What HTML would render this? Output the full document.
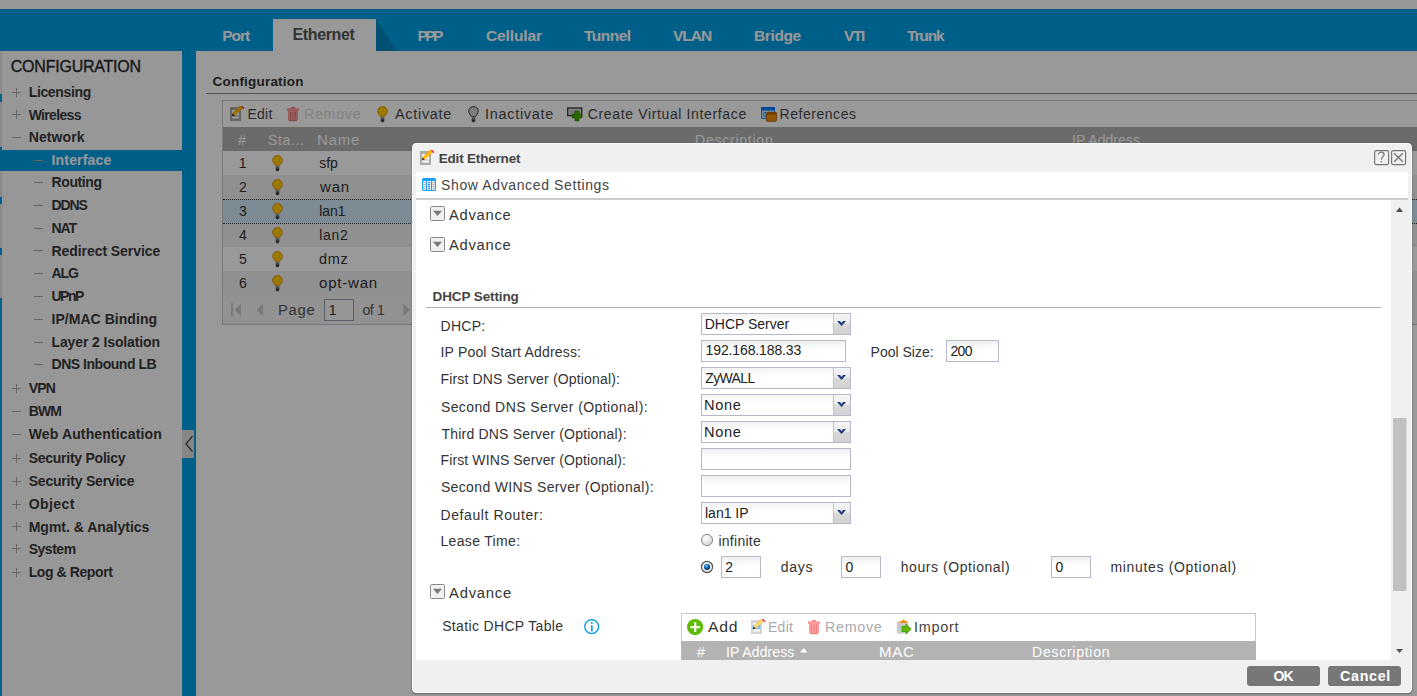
<!DOCTYPE html>
<html><head><meta charset="utf-8">
<style>
*{margin:0;padding:0;box-sizing:border-box}
html,body{width:1417px;height:696px;overflow:hidden}
body{position:relative;background:#fff;font-family:"Liberation Sans",sans-serif;color:#333}
.a{position:absolute;white-space:nowrap}
.sel{border:1px solid #b6b8cc;background:linear-gradient(#f2f2f2,#fff 40%)}
.selarr{border-left:1px solid #c0c2d0;background:linear-gradient(#f6f6f6,#ececec 45%,#d9d9d9 52%,#d2d2d2)}
.inp{border:1px solid #b6b8cc;background:linear-gradient(#eef0f0,#fff 45%)}
.btn{background:#777;border-radius:3px}
</style></head><body>
<div class="a" style="left:0;top:0;width:1417px;height:9px;background:#fefefe"></div>
<div class="a" style="left:0;top:9px;width:1417px;height:42px;background:#009ee3"></div>
<div class="a" style="left:273px;top:19px;width:103px;height:32px;background:#fff"></div>
<svg class="a" style="left:376px;top:19px" width="22" height="32"><polygon points="0,0 0,32 21,32" fill="#0086c1"/></svg>
<div class="a t" style="left:222.20px;top:27.88px;font-size:15.5px;line-height:15.5px;color:#fff;font-weight:bold;letter-spacing:-1.013px">Port</div>
<div class="a t" style="left:417.50px;top:27.88px;font-size:15.5px;line-height:15.5px;color:#fff;font-weight:bold;letter-spacing:-2.588px">PPP</div>
<div class="a t" style="left:486.00px;top:27.88px;font-size:15.5px;line-height:15.5px;color:#fff;font-weight:bold;letter-spacing:-0.117px">Cellular</div>
<div class="a t" style="left:584.00px;top:27.88px;font-size:15.5px;line-height:15.5px;color:#fff;font-weight:bold;letter-spacing:-0.508px">Tunnel</div>
<div class="a t" style="left:673.00px;top:27.88px;font-size:15.5px;line-height:15.5px;color:#fff;font-weight:bold;letter-spacing:-1.000px">VLAN</div>
<div class="a t" style="left:754.00px;top:27.88px;font-size:15.5px;line-height:15.5px;color:#fff;font-weight:bold;letter-spacing:-0.374px">Bridge</div>
<div class="a t" style="left:844.00px;top:27.88px;font-size:15.5px;line-height:15.5px;color:#fff;font-weight:bold;letter-spacing:-1.403px">VTI</div>
<div class="a t" style="left:907.00px;top:27.88px;font-size:15.5px;line-height:15.5px;color:#fff;font-weight:bold;letter-spacing:-1.145px">Trunk</div>
<div class="a t" style="left:292.50px;top:26.86px;font-size:16px;line-height:16px;color:#555;font-weight:bold;letter-spacing:-0.367px">Ethernet</div>
<div class="a" style="left:0;top:51px;width:2px;height:645px;background:#e6e6e6"></div>
<div class="a" style="left:0;top:94px;width:2px;height:8px;background:#009ee3"></div>
<div class="a" style="left:0;top:147px;width:2px;height:24px;background:#009ee3"></div>
<div class="a" style="left:0;top:197px;width:2px;height:7px;background:#009ee3"></div>
<div class="a" style="left:0;top:248px;width:2px;height:7px;background:#009ee3"></div>
<div class="a" style="left:0;top:298px;width:2px;height:398px;background:#009ee3"></div>
<div class="a" style="left:2px;top:51px;width:180px;height:645px;background:#fcfcfc"></div>
<div class="a" style="left:182px;top:51px;width:14px;height:645px;background:#009ee3"></div>
<div class="a" style="left:182px;top:430px;width:12px;height:28px;background:#e0e0e0"></div>
<svg class="a" style="left:182px;top:430px" width="12" height="28"><polyline points="10.5,6 4,14 10.5,21.5" fill="none" stroke="#444" stroke-width="1.2"/></svg>
<div class="a" style="left:2px;top:150px;width:180px;height:21px;background:#009ee3"></div>
<div class="a t" style="left:10.80px;top:58.76px;font-size:16px;line-height:16px;color:#2a2a2a;letter-spacing:-0.231px;-webkit-text-stroke:0.35px #2a2a2a">CONFIGURATION</div>
<div class="a t" style="left:28.70px;top:84.85px;font-size:14px;line-height:14px;color:#3a3a3a;font-weight:bold;letter-spacing:-0.349px">Licensing</div>
<div class="a" style="left:12px;top:92px;width:9px;height:1px;background:#aaa"></div>
<div class="a" style="left:16px;top:88px;width:1px;height:9px;background:#aaa"></div>
<div class="a t" style="left:28.70px;top:107.55px;font-size:14px;line-height:14px;color:#3a3a3a;font-weight:bold;letter-spacing:-0.668px">Wireless</div>
<div class="a" style="left:12px;top:114px;width:9px;height:1px;background:#aaa"></div>
<div class="a" style="left:16px;top:110px;width:1px;height:9px;background:#aaa"></div>
<div class="a t" style="left:28.70px;top:130.45px;font-size:14px;line-height:14px;color:#3a3a3a;font-weight:bold;letter-spacing:0.092px">Network</div>
<div class="a" style="left:12px;top:137px;width:9px;height:1px;background:#aaa"></div>
<div class="a t" style="left:51.50px;top:152.95px;font-size:14px;line-height:14px;color:#ffffff;font-weight:bold;letter-spacing:0.178px">Interface</div>
<div class="a" style="left:34px;top:160px;width:9px;height:1px;background:#aaa"></div>
<div class="a t" style="left:51.50px;top:175.15px;font-size:14px;line-height:14px;color:#3a3a3a;font-weight:bold;letter-spacing:-0.386px">Routing</div>
<div class="a" style="left:34px;top:182px;width:9px;height:1px;background:#aaa"></div>
<div class="a t" style="left:51.50px;top:198.05px;font-size:14px;line-height:14px;color:#3a3a3a;font-weight:bold;letter-spacing:-1.110px">DDNS</div>
<div class="a" style="left:34px;top:205px;width:9px;height:1px;background:#aaa"></div>
<div class="a t" style="left:51.50px;top:221.05px;font-size:14px;line-height:14px;color:#3a3a3a;font-weight:bold;letter-spacing:-1.091px">NAT</div>
<div class="a" style="left:34px;top:228px;width:9px;height:1px;background:#aaa"></div>
<div class="a t" style="left:51.50px;top:243.55px;font-size:14px;line-height:14px;color:#3a3a3a;font-weight:bold;letter-spacing:-0.063px">Redirect Service</div>
<div class="a" style="left:34px;top:250px;width:9px;height:1px;background:#aaa"></div>
<div class="a t" style="left:51.50px;top:266.05px;font-size:14px;line-height:14px;color:#3a3a3a;font-weight:bold;letter-spacing:-1.081px">ALG</div>
<div class="a" style="left:34px;top:273px;width:9px;height:1px;background:#aaa"></div>
<div class="a t" style="left:51.50px;top:289.15px;font-size:14px;line-height:14px;color:#3a3a3a;font-weight:bold;letter-spacing:-1.533px">UPnP</div>
<div class="a" style="left:34px;top:296px;width:9px;height:1px;background:#aaa"></div>
<div class="a t" style="left:51.50px;top:311.85px;font-size:14px;line-height:14px;color:#3a3a3a;font-weight:bold;letter-spacing:0.043px">IP/MAC Binding</div>
<div class="a" style="left:34px;top:319px;width:9px;height:1px;background:#aaa"></div>
<div class="a t" style="left:51.50px;top:334.95px;font-size:14px;line-height:14px;color:#3a3a3a;font-weight:bold;letter-spacing:-0.121px">Layer 2 Isolation</div>
<div class="a" style="left:34px;top:342px;width:9px;height:1px;background:#aaa"></div>
<div class="a t" style="left:51.50px;top:357.45px;font-size:14px;line-height:14px;color:#3a3a3a;font-weight:bold;letter-spacing:-0.468px">DNS Inbound LB</div>
<div class="a" style="left:34px;top:364px;width:9px;height:1px;background:#aaa"></div>
<div class="a t" style="left:28.70px;top:381.45px;font-size:14px;line-height:14px;color:#3a3a3a;font-weight:bold;letter-spacing:-0.838px">VPN</div>
<div class="a" style="left:12px;top:388px;width:9px;height:1px;background:#aaa"></div>
<div class="a" style="left:16px;top:384px;width:1px;height:9px;background:#aaa"></div>
<div class="a t" style="left:28.70px;top:404.05px;font-size:14px;line-height:14px;color:#3a3a3a;font-weight:bold;letter-spacing:-0.912px">BWM</div>
<div class="a" style="left:12px;top:411px;width:9px;height:1px;background:#aaa"></div>
<div class="a t" style="left:28.70px;top:427.35px;font-size:14px;line-height:14px;color:#3a3a3a;font-weight:bold;letter-spacing:0.139px">Web Authentication</div>
<div class="a" style="left:12px;top:434px;width:9px;height:1px;background:#aaa"></div>
<div class="a t" style="left:28.70px;top:450.85px;font-size:14px;line-height:14px;color:#3a3a3a;font-weight:bold;letter-spacing:-0.257px">Security Policy</div>
<div class="a" style="left:12px;top:458px;width:9px;height:1px;background:#aaa"></div>
<div class="a" style="left:16px;top:454px;width:1px;height:9px;background:#aaa"></div>
<div class="a t" style="left:28.70px;top:473.85px;font-size:14px;line-height:14px;color:#3a3a3a;font-weight:bold;letter-spacing:-0.211px">Security Service</div>
<div class="a" style="left:12px;top:481px;width:9px;height:1px;background:#aaa"></div>
<div class="a" style="left:16px;top:477px;width:1px;height:9px;background:#aaa"></div>
<div class="a t" style="left:28.70px;top:496.85px;font-size:14px;line-height:14px;color:#3a3a3a;font-weight:bold;letter-spacing:0.419px">Object</div>
<div class="a" style="left:12px;top:504px;width:9px;height:1px;background:#aaa"></div>
<div class="a" style="left:16px;top:500px;width:1px;height:9px;background:#aaa"></div>
<div class="a t" style="left:28.70px;top:519.55px;font-size:14px;line-height:14px;color:#3a3a3a;font-weight:bold;letter-spacing:-0.010px">Mgmt. &amp; Analytics</div>
<div class="a" style="left:12px;top:526px;width:9px;height:1px;background:#aaa"></div>
<div class="a" style="left:16px;top:522px;width:1px;height:9px;background:#aaa"></div>
<div class="a t" style="left:28.70px;top:541.55px;font-size:14px;line-height:14px;color:#3a3a3a;font-weight:bold;letter-spacing:-0.472px">System</div>
<div class="a" style="left:12px;top:548px;width:9px;height:1px;background:#aaa"></div>
<div class="a" style="left:16px;top:544px;width:1px;height:9px;background:#aaa"></div>
<div class="a t" style="left:28.70px;top:565.15px;font-size:14px;line-height:14px;color:#3a3a3a;font-weight:bold;letter-spacing:-0.408px">Log &amp; Report</div>
<div class="a" style="left:12px;top:572px;width:9px;height:1px;background:#aaa"></div>
<div class="a" style="left:16px;top:568px;width:1px;height:9px;background:#aaa"></div>
<div class="a" style="left:196px;top:51px;width:1221px;height:645px;background:#fff"></div>
<div class="a t" style="left:212.60px;top:75.47px;font-size:13.5px;line-height:13.5px;color:#333;font-weight:bold;letter-spacing:0.197px">Configuration</div>
<div class="a" style="left:206px;top:93px;width:1211px;height:1px;background:#8a8a8a"></div>
<div class="a" style="left:222px;top:100px;width:1200px;height:225px;border:1px solid #c8c8c8;background:#fff"></div>
<div class="a" style="left:223px;top:127px;width:1194px;height:24px;background:#b3b3b3"></div>
<svg class="a" style="left:230px;top:106px" width="15" height="16" viewBox="0 0 15 16"><rect x="0" y="1" width="11" height="14" fill="#aaaaaa"/><rect x="2" y="4" width="7" height="5.5" fill="#fff"/><rect x="2" y="10.5" width="7" height="2" fill="#fff"/><polygon points="4.6,9.6 2.4,7.4 10.9,-0.6 13.1,1.6" fill="#ffbe00" stroke="#f08c00" stroke-width="0.6"/><polygon points="2.4,7.4 4.6,9.6 2,10.2" fill="#222"/><circle cx="12.2" cy="0.9" r="0.9" fill="#e8204a"/><circle cx="13.4" cy="2.1" r="0.9" fill="#e8204a"/></svg>
<div class="a t" style="left:247.60px;top:107.15px;font-size:14px;line-height:14px;color:#4a4a4a;letter-spacing:0.189px">Edit</div>
<svg class="a" style="left:287px;top:107px" width="12" height="15" viewBox="0 0 12 15"><rect x="4.2" y="0" width="3.8" height="1.8" fill="#e07a7a"/><rect x="0" y="1.2" width="12" height="2.8" rx="0.6" fill="#ff9a9a"/><rect x="1" y="4" width="10" height="9" fill="#ff9a9a"/><rect x="2" y="13" width="8" height="1.2" fill="#e07a7a"/><rect x="3" y="5" width="1" height="7" fill="#e07a7a"/><rect x="5.5" y="5" width="1" height="7" fill="#e07a7a"/><rect x="8" y="5" width="1" height="7" fill="#e07a7a"/></svg>
<div class="a t" style="left:304.40px;top:107.15px;font-size:14px;line-height:14px;color:#d8d8d8;letter-spacing:0.700px;transform:scaleX(1.0174);transform-origin:1.00px 0">Remove</div>
<svg class="a" style="left:376.5px;top:105.5px" width="11" height="17" viewBox="0 0 11 17"><defs><linearGradient id="bb1" x1="0" y1="0" x2="0" y2="1"><stop offset="0" stop-color="#a8b8c8"/><stop offset="1" stop-color="#222"/></linearGradient></defs><path d="M5.5,0.6 C8.3,0.6 10.3,2.6 10.3,5.2 C10.3,7.3 8.6,8.6 7.6,10.6 L3.4,10.6 C2.4,8.6 0.7,7.3 0.7,5.2 C0.7,2.6 2.7,0.6 5.5,0.6 Z" fill="#ffcc00" stroke="#f08000" stroke-width="0.9"/><rect x="3.7" y="10.8" width="3.6" height="4.4" fill="url(#bb1)"/><rect x="4.4" y="15.2" width="2.2" height="1" fill="#111"/></svg>
<div class="a t" style="left:395.00px;top:107.15px;font-size:14px;line-height:14px;color:#4a4a4a;letter-spacing:0.700px;transform:scaleX(1.0289);transform-origin:0.00px 0">Activate</div>
<svg class="a" style="left:467.5px;top:105.5px" width="11" height="17" viewBox="0 0 11 17"><defs><linearGradient id="bb0" x1="0" y1="0" x2="0" y2="1"><stop offset="0" stop-color="#a8b8c8"/><stop offset="1" stop-color="#222"/></linearGradient></defs><path d="M5.5,0.6 C8.3,0.6 10.3,2.6 10.3,5.2 C10.3,7.3 8.6,8.6 7.6,10.6 L3.4,10.6 C2.4,8.6 0.7,7.3 0.7,5.2 C0.7,2.6 2.7,0.6 5.5,0.6 Z" fill="#d0d0d0" stroke="#303030" stroke-width="0.9"/><rect x="3.7" y="10.8" width="3.6" height="4.4" fill="url(#bb0)"/><rect x="4.4" y="15.2" width="2.2" height="1" fill="#111"/></svg>
<div class="a t" style="left:484.60px;top:107.15px;font-size:14px;line-height:14px;color:#4a4a4a;letter-spacing:0.700px;transform:scaleX(1.0315);transform-origin:1.00px 0">Inactivate</div>
<svg class="a" style="left:567px;top:107px" width="16" height="15" viewBox="0 0 16 15"><rect x="0.7" y="1" width="14" height="7.6" fill="#e6e6e6" stroke="#333" stroke-width="1.3"/><rect x="2.5" y="2.6" width="10.5" height="4.2" fill="#c8c8c8"/><path d="M8,4 h4 v3 h3 v4 h-3 v3 h-4 v-3 h-3 v-4 h3 z" fill="#44aa00" stroke="#2a7a00" stroke-width="0.6"/></svg>
<div class="a t" style="left:587.80px;top:107.15px;font-size:14px;line-height:14px;color:#4a4a4a;letter-spacing:0.638px">Create Virtual Interface</div>
<svg class="a" style="left:761px;top:107px" width="16" height="15" viewBox="0 0 16 15"><rect x="0" y="0" width="14" height="12" rx="1" fill="#20a0ff"/><rect x="0" y="0" width="14" height="3" fill="#0077ff"/><rect x="1.2" y="3.8" width="11.6" height="7" fill="#fff"/><rect x="2.3" y="4.8" width="3.5" height="5" fill="#20a0ff"/><rect x="3.2" y="5.8" width="1.7" height="3" fill="#bfe4ff"/><rect x="6.8" y="4.8" width="5" height="2" fill="#20a0ff"/><rect x="5.3" y="5.3" width="10.2" height="9" rx="1.2" fill="#f08c00" stroke="#a05000" stroke-width="0.8"/><rect x="6" y="6.3" width="9" height="1" fill="#a05000"/></svg>
<div class="a t" style="left:779.50px;top:107.15px;font-size:14px;line-height:14px;color:#4a4a4a;letter-spacing:0.545px">References</div>
<div class="a t" style="left:237.90px;top:133.05px;font-size:14px;line-height:14px;color:#fff">#</div>
<div class="a t" style="left:268.00px;top:133.05px;font-size:14px;line-height:14px;color:#fff;letter-spacing:0.641px">Sta...</div>
<div class="a t" style="left:317.10px;top:133.05px;font-size:14px;line-height:14px;color:#fff;letter-spacing:0.700px;transform:scaleX(1.0735);transform-origin:1.00px 0">Name</div>
<div class="a t" style="left:695.00px;top:133.05px;font-size:14px;line-height:14px;color:#fff;letter-spacing:0.700px;transform:scaleX(1.0101);transform-origin:1.00px 0">Description</div>
<div class="a t" style="left:1072.00px;top:133.05px;font-size:14px;line-height:14px;color:#fff;letter-spacing:0.058px">IP Address</div>
<div class="a" style="left:223px;top:151px;width:1194px;height:24px;background:#ffffff"></div>
<div class="a" style="left:223px;top:175px;width:1194px;height:24px;background:#f0f0f0"></div>
<div class="a" style="left:223px;top:199px;width:1194px;height:24px;background:#cfe6f5"></div>
<div class="a" style="left:223px;top:223px;width:1194px;height:24px;background:#f0f0f0"></div>
<div class="a" style="left:223px;top:247px;width:1194px;height:24px;background:#ffffff"></div>
<div class="a" style="left:223px;top:271px;width:1194px;height:24px;background:#f0f0f0"></div>
<div class="a" style="left:223px;top:199px;width:1194px;height:0;border-top:1px dotted #333"></div>
<div class="a" style="left:223px;top:223px;width:1194px;height:0;border-top:1px dotted #333"></div>
<div class="a t" style="left:238.80px;top:155.95px;font-size:14px;line-height:14px;color:#333">1</div>
<svg class="a" style="left:271.5px;top:155px" width="11" height="17" viewBox="0 0 11 17"><defs><linearGradient id="bb1" x1="0" y1="0" x2="0" y2="1"><stop offset="0" stop-color="#a8b8c8"/><stop offset="1" stop-color="#222"/></linearGradient></defs><path d="M5.5,0.6 C8.3,0.6 10.3,2.6 10.3,5.2 C10.3,7.3 8.6,8.6 7.6,10.6 L3.4,10.6 C2.4,8.6 0.7,7.3 0.7,5.2 C0.7,2.6 2.7,0.6 5.5,0.6 Z" fill="#ffcc00" stroke="#f08000" stroke-width="0.9"/><rect x="3.7" y="10.8" width="3.6" height="4.4" fill="url(#bb1)"/><rect x="4.4" y="15.2" width="2.2" height="1" fill="#111"/></svg>
<div class="a t" style="left:319.30px;top:155.95px;font-size:14px;line-height:14px;color:#333;letter-spacing:-0.145px">sfp</div>
<div class="a t" style="left:239.00px;top:179.95px;font-size:14px;line-height:14px;color:#333">2</div>
<svg class="a" style="left:271.5px;top:179px" width="11" height="17" viewBox="0 0 11 17"><defs><linearGradient id="bb1" x1="0" y1="0" x2="0" y2="1"><stop offset="0" stop-color="#a8b8c8"/><stop offset="1" stop-color="#222"/></linearGradient></defs><path d="M5.5,0.6 C8.3,0.6 10.3,2.6 10.3,5.2 C10.3,7.3 8.6,8.6 7.6,10.6 L3.4,10.6 C2.4,8.6 0.7,7.3 0.7,5.2 C0.7,2.6 2.7,0.6 5.5,0.6 Z" fill="#ffcc00" stroke="#f08000" stroke-width="0.9"/><rect x="3.7" y="10.8" width="3.6" height="4.4" fill="url(#bb1)"/><rect x="4.4" y="15.2" width="2.2" height="1" fill="#111"/></svg>
<div class="a t" style="left:320.30px;top:179.95px;font-size:14px;line-height:14px;color:#333;letter-spacing:0.700px;transform:scaleX(1.0697);transform-origin:-1.00px 0">wan</div>
<div class="a t" style="left:239.00px;top:203.95px;font-size:14px;line-height:14px;color:#333">3</div>
<svg class="a" style="left:271.5px;top:203px" width="11" height="17" viewBox="0 0 11 17"><defs><linearGradient id="bb1" x1="0" y1="0" x2="0" y2="1"><stop offset="0" stop-color="#a8b8c8"/><stop offset="1" stop-color="#222"/></linearGradient></defs><path d="M5.5,0.6 C8.3,0.6 10.3,2.6 10.3,5.2 C10.3,7.3 8.6,8.6 7.6,10.6 L3.4,10.6 C2.4,8.6 0.7,7.3 0.7,5.2 C0.7,2.6 2.7,0.6 5.5,0.6 Z" fill="#ffcc00" stroke="#f08000" stroke-width="0.9"/><rect x="3.7" y="10.8" width="3.6" height="4.4" fill="url(#bb1)"/><rect x="4.4" y="15.2" width="2.2" height="1" fill="#111"/></svg>
<div class="a t" style="left:319.30px;top:203.95px;font-size:14px;line-height:14px;color:#333;letter-spacing:-0.061px">lan1</div>
<div class="a t" style="left:239.00px;top:227.95px;font-size:14px;line-height:14px;color:#333">4</div>
<svg class="a" style="left:271.5px;top:227px" width="11" height="17" viewBox="0 0 11 17"><defs><linearGradient id="bb1" x1="0" y1="0" x2="0" y2="1"><stop offset="0" stop-color="#a8b8c8"/><stop offset="1" stop-color="#222"/></linearGradient></defs><path d="M5.5,0.6 C8.3,0.6 10.3,2.6 10.3,5.2 C10.3,7.3 8.6,8.6 7.6,10.6 L3.4,10.6 C2.4,8.6 0.7,7.3 0.7,5.2 C0.7,2.6 2.7,0.6 5.5,0.6 Z" fill="#ffcc00" stroke="#f08000" stroke-width="0.9"/><rect x="3.7" y="10.8" width="3.6" height="4.4" fill="url(#bb1)"/><rect x="4.4" y="15.2" width="2.2" height="1" fill="#111"/></svg>
<div class="a t" style="left:319.30px;top:227.95px;font-size:14px;line-height:14px;color:#333;letter-spacing:0.672px">lan2</div>
<div class="a t" style="left:239.00px;top:251.95px;font-size:14px;line-height:14px;color:#333">5</div>
<svg class="a" style="left:271.5px;top:251px" width="11" height="17" viewBox="0 0 11 17"><defs><linearGradient id="bb1" x1="0" y1="0" x2="0" y2="1"><stop offset="0" stop-color="#a8b8c8"/><stop offset="1" stop-color="#222"/></linearGradient></defs><path d="M5.5,0.6 C8.3,0.6 10.3,2.6 10.3,5.2 C10.3,7.3 8.6,8.6 7.6,10.6 L3.4,10.6 C2.4,8.6 0.7,7.3 0.7,5.2 C0.7,2.6 2.7,0.6 5.5,0.6 Z" fill="#ffcc00" stroke="#f08000" stroke-width="0.9"/><rect x="3.7" y="10.8" width="3.6" height="4.4" fill="url(#bb1)"/><rect x="4.4" y="15.2" width="2.2" height="1" fill="#111"/></svg>
<div class="a t" style="left:319.30px;top:251.95px;font-size:14px;line-height:14px;color:#333;letter-spacing:0.700px;transform:scaleX(1.0306);transform-origin:0.00px 0">dmz</div>
<div class="a t" style="left:239.00px;top:275.95px;font-size:14px;line-height:14px;color:#333">6</div>
<svg class="a" style="left:271.5px;top:275px" width="11" height="17" viewBox="0 0 11 17"><defs><linearGradient id="bb1" x1="0" y1="0" x2="0" y2="1"><stop offset="0" stop-color="#a8b8c8"/><stop offset="1" stop-color="#222"/></linearGradient></defs><path d="M5.5,0.6 C8.3,0.6 10.3,2.6 10.3,5.2 C10.3,7.3 8.6,8.6 7.6,10.6 L3.4,10.6 C2.4,8.6 0.7,7.3 0.7,5.2 C0.7,2.6 2.7,0.6 5.5,0.6 Z" fill="#ffcc00" stroke="#f08000" stroke-width="0.9"/><rect x="3.7" y="10.8" width="3.6" height="4.4" fill="url(#bb1)"/><rect x="4.4" y="15.2" width="2.2" height="1" fill="#111"/></svg>
<div class="a t" style="left:319.30px;top:275.95px;font-size:14px;line-height:14px;color:#333;letter-spacing:0.700px;transform:scaleX(1.0785);transform-origin:0.00px 0">opt-wan</div>
<div class="a" style="left:223px;top:295px;width:1194px;height:29px;background:#f4f4f4"></div>
<svg class="a" style="left:229px;top:303px" width="190" height="16"><rect x="2" y="0.3" width="2" height="13.2" fill="#c8c8c8"/><polygon points="12,0.8 5.8,6.9 12,13" fill="#c8c8c8"/><polygon points="34,0.8 27.8,6.9 34,13" fill="#c8c8c8"/><polygon points="174.5,0.8 181,6.9 174.5,13" fill="#c8c8c8"/></svg>
<div class="a t" style="left:278.00px;top:302.55px;font-size:14px;line-height:14px;color:#555;letter-spacing:0.700px;transform:scaleX(1.0585);transform-origin:1.00px 0">Page</div>
<div class="a" style="left:324px;top:299px;width:30px;height:22px;border:1px solid #9a9ab0;background:#f8f8f8"></div>
<div class="a t" style="left:328.80px;top:302.55px;font-size:14px;line-height:14px;color:#333">1</div>
<div class="a t" style="left:362.40px;top:302.55px;font-size:14px;line-height:14px;color:#555;letter-spacing:-0.322px">of 1</div>
<div class="a" style="left:0;top:0;width:1417px;height:696px;background:rgba(0,0,0,0.4)"></div>
<div class="a" style="left:412px;top:143px;width:1000px;height:550px;background:#f0f0f0;border-radius:4px;box-shadow:0 1px 2px rgba(0,0,0,0.35);border:1px solid #f6f9fc"></div>
<svg class="a" style="left:420px;top:150px" width="15" height="16" viewBox="0 0 15 16"><rect x="0" y="1" width="11" height="14" fill="#aaaaaa"/><rect x="2" y="4" width="7" height="5.5" fill="#fff"/><rect x="2" y="10.5" width="7" height="2" fill="#fff"/><polygon points="4.6,9.6 2.4,7.4 10.9,-0.6 13.1,1.6" fill="#ffbe00" stroke="#f08c00" stroke-width="0.6"/><polygon points="2.4,7.4 4.6,9.6 2,10.2" fill="#222"/><circle cx="12.2" cy="0.9" r="0.9" fill="#e8204a"/><circle cx="13.4" cy="2.1" r="0.9" fill="#e8204a"/></svg>
<div class="a t" style="left:438.70px;top:151.57px;font-size:13.5px;line-height:13.5px;color:#444;font-weight:bold;letter-spacing:-0.184px">Edit Ethernet</div>
<svg class="a" style="left:1374px;top:150px" width="33" height="16"><rect x="0.6" y="0.6" width="14" height="14" rx="1.5" fill="none" stroke="#777" stroke-width="1.2"/><rect x="17.6" y="0.6" width="14" height="14" rx="1.5" fill="none" stroke="#777" stroke-width="1.2"/><path d="M4.4,4.6 C4.4,3.2 5.6,2.2 7.3,2.2 C9,2.2 10.1,3.3 10.1,4.6 C10.1,6.2 8.6,6.8 7.9,8 L7.4,9.6" fill="none" stroke="#777" stroke-width="1.2"/><circle cx="7.3" cy="11.7" r="0.8" fill="#777"/><line x1="20.2" y1="3.2" x2="28.8" y2="11.8" stroke="#777" stroke-width="1.3"/><line x1="28.8" y1="3.2" x2="20.2" y2="11.8" stroke="#777" stroke-width="1.3"/></svg>
<div class="a" style="left:416px;top:172px;width:992px;height:26px;background:#fff"></div>
<div class="a" style="left:416px;top:198px;width:992px;height:2px;background:#cccccc"></div>
<div class="a" style="left:416px;top:200px;width:975px;height:460px;background:#fff"></div>
<div class="a" style="left:1391px;top:200px;width:17px;height:460px;background:#f0f0f0"></div>
<svg class="a" style="left:1391px;top:200px" width="17" height="460"><polygon points="5,12 8.5,7.5 12,12" fill="#505050"/><rect x="2" y="218" width="13.5" height="173" fill="#c1c1c1"/><polygon points="5,449 8.5,453 12,449" fill="#505050"/></svg>
<svg class="a" style="left:422px;top:178px" width="14" height="13" viewBox="0 0 14 13"><rect x="0" y="0" width="14" height="13" rx="1.5" fill="#1aa0ff"/><rect x="1.2" y="3" width="2.8" height="9" fill="#fff"/><rect x="5" y="3" width="4" height="9" fill="#e8f6ff"/><rect x="10" y="3" width="2.8" height="9" fill="#fff"/><g fill="#a89888"><rect x="1.6" y="4.2" width="2" height="1"/><rect x="1.6" y="6.2" width="2" height="1"/><rect x="1.6" y="8.2" width="2" height="1"/><rect x="1.6" y="10.2" width="2" height="1"/><rect x="10.4" y="4.2" width="2" height="1"/><rect x="10.4" y="6.2" width="2" height="1"/><rect x="10.4" y="8.2" width="2" height="1"/><rect x="10.4" y="10.2" width="2" height="1"/></g><g fill="#0a70ff"><rect x="6" y="4.2" width="2" height="1"/><rect x="6" y="6.2" width="2" height="1"/><rect x="6" y="8.2" width="2" height="1"/><rect x="6" y="10.2" width="2" height="1"/></g></svg>
<div class="a t" style="left:441.00px;top:177.85px;font-size:14px;line-height:14px;color:#444;letter-spacing:0.626px">Show Advanced Settings</div>
<svg class="a" style="left:430px;top:206px" width="16" height="16"><rect x="0.5" y="0.5" width="14" height="14" rx="1" fill="#f0f0f0" stroke="#888"/><polygon points="3,4.8 12,4.8 7.5,10" fill="#777"/></svg>
<div class="a t" style="left:449.00px;top:207.95px;font-size:14px;line-height:14px;color:#333;letter-spacing:0.700px;transform:scaleX(1.0527);transform-origin:0.00px 0">Advance</div>
<svg class="a" style="left:430px;top:236.5px" width="16" height="16"><rect x="0.5" y="0.5" width="14" height="14" rx="1" fill="#f0f0f0" stroke="#888"/><polygon points="3,4.8 12,4.8 7.5,10" fill="#777"/></svg>
<div class="a t" style="left:449.00px;top:238.15px;font-size:14px;line-height:14px;color:#333;letter-spacing:0.700px;transform:scaleX(1.0527);transform-origin:0.00px 0">Advance</div>
<div class="a t" style="left:432.60px;top:289.57px;font-size:13.5px;line-height:13.5px;color:#444;font-weight:bold;letter-spacing:-0.119px">DHCP Setting</div>
<div class="a" style="left:426px;top:307px;width:955px;height:1px;background:#b0b0b0"></div>
<div class="a t" style="left:440.50px;top:319.15px;font-size:14px;line-height:14px;color:#333;letter-spacing:0.283px">DHCP:</div>
<div class="a t" style="left:440.50px;top:344.85px;font-size:14px;line-height:14px;color:#333;letter-spacing:0.179px">IP Pool Start Address:</div>
<div class="a t" style="left:440.50px;top:372.35px;font-size:14px;line-height:14px;color:#333;letter-spacing:0.161px">First DNS Server (Optional):</div>
<div class="a t" style="left:440.90px;top:399.55px;font-size:14px;line-height:14px;color:#333;letter-spacing:0.407px">Second DNS Server (Optional):</div>
<div class="a t" style="left:441.50px;top:426.65px;font-size:14px;line-height:14px;color:#333;letter-spacing:0.199px">Third DNS Server (Optional):</div>
<div class="a t" style="left:440.50px;top:452.95px;font-size:14px;line-height:14px;color:#333;letter-spacing:0.120px">First WINS Server (Optional):</div>
<div class="a t" style="left:440.90px;top:479.95px;font-size:14px;line-height:14px;color:#333;letter-spacing:0.358px">Second WINS Server (Optional):</div>
<div class="a t" style="left:440.50px;top:507.85px;font-size:14px;line-height:14px;color:#333;letter-spacing:0.595px">Default Router:</div>
<div class="a t" style="left:440.50px;top:533.75px;font-size:14px;line-height:14px;color:#333;letter-spacing:0.328px">Lease Time:</div>
<div class="a sel" style="left:701px;top:313px;width:150px;height:22px"></div><div class="a selarr" style="left:833px;top:314px;width:17px;height:20px"></div><svg class="a" style="left:837px;top:321px" width="10" height="6"><polygon points="0,0 3,0 4.5,2 6,0 9,0 4.5,5" fill="#1e3c80"/></svg>
<div class="a t" style="left:704.70px;top:317.15px;font-size:14px;line-height:14px;color:#222">DHCP Server</div>
<div class="a inp" style="left:701px;top:340px;width:145px;height:22px"></div>
<div class="a t" style="left:705.60px;top:343.25px;font-size:14px;line-height:14px;color:#222;letter-spacing:-0.125px">192.168.188.33</div>
<div class="a t" style="left:870.60px;top:344.85px;font-size:14px;line-height:14px;color:#333">Pool Size:</div>
<div class="a inp" style="left:946px;top:340px;width:53px;height:22px"></div>
<div class="a t" style="left:950.50px;top:343.75px;font-size:14px;line-height:14px;color:#222;letter-spacing:-0.686px">200</div>
<div class="a sel" style="left:701px;top:367px;width:150px;height:22px"></div><div class="a selarr" style="left:833px;top:368px;width:17px;height:20px"></div><svg class="a" style="left:837px;top:375px" width="10" height="6"><polygon points="0,0 3,0 4.5,2 6,0 9,0 4.5,5" fill="#1e3c80"/></svg>
<div class="a t" style="left:705.20px;top:371.35px;font-size:14px;line-height:14px;color:#222;letter-spacing:-0.614px">ZyWALL</div>
<div class="a sel" style="left:701px;top:394px;width:150px;height:22px"></div><div class="a selarr" style="left:833px;top:395px;width:17px;height:20px"></div><svg class="a" style="left:837px;top:402px" width="10" height="6"><polygon points="0,0 3,0 4.5,2 6,0 9,0 4.5,5" fill="#1e3c80"/></svg>
<div class="a t" style="left:704.20px;top:398.15px;font-size:14px;line-height:14px;color:#222;letter-spacing:0.700px;transform:scaleX(1.0407);transform-origin:1.00px 0">None</div>
<div class="a sel" style="left:701px;top:421px;width:150px;height:22px"></div><div class="a selarr" style="left:833px;top:422px;width:17px;height:20px"></div><svg class="a" style="left:837px;top:429px" width="10" height="6"><polygon points="0,0 3,0 4.5,2 6,0 9,0 4.5,5" fill="#1e3c80"/></svg>
<div class="a t" style="left:704.20px;top:425.15px;font-size:14px;line-height:14px;color:#222;letter-spacing:0.700px;transform:scaleX(1.0407);transform-origin:1.00px 0">None</div>
<div class="a inp" style="left:701px;top:448px;width:150px;height:22px"></div>
<div class="a inp" style="left:701px;top:475px;width:150px;height:22px"></div>
<div class="a sel" style="left:701px;top:502px;width:150px;height:22px"></div><div class="a selarr" style="left:833px;top:503px;width:17px;height:20px"></div><svg class="a" style="left:837px;top:510px" width="10" height="6"><polygon points="0,0 3,0 4.5,2 6,0 9,0 4.5,5" fill="#1e3c80"/></svg>
<div class="a t" style="left:705.00px;top:505.55px;font-size:14px;line-height:14px;color:#222">lan1 IP</div>
<svg class="a" style="left:700px;top:533px" width="14" height="42"><defs><radialGradient id="rg" cx="0.4" cy="0.35" r="0.7"><stop offset="0" stop-color="#fff"/><stop offset="1" stop-color="#cfcfcf"/></radialGradient><radialGradient id="bg" cx="0.4" cy="0.35" r="0.6"><stop offset="0" stop-color="#7fd0ff"/><stop offset="0.5" stop-color="#1070c0"/><stop offset="1" stop-color="#002a60"/></radialGradient></defs><circle cx="7" cy="7" r="5.6" fill="url(#rg)" stroke="#8a8a8a" stroke-width="1"/><circle cx="7" cy="34" r="5.6" fill="#e8e8e8" stroke="#555" stroke-width="1.2"/><circle cx="7" cy="34" r="3" fill="url(#bg)"/></svg>
<div class="a t" style="left:718.40px;top:534.05px;font-size:14px;line-height:14px;color:#333;letter-spacing:0.274px">infinite</div>
<div class="a inp" style="left:721px;top:556px;width:40px;height:22px"></div>
<div class="a t" style="left:725.30px;top:559.95px;font-size:14px;line-height:14px;color:#222">2</div>
<div class="a t" style="left:780.80px;top:559.95px;font-size:14px;line-height:14px;color:#333;letter-spacing:0.676px">days</div>
<div class="a inp" style="left:841px;top:556px;width:40px;height:22px"></div>
<div class="a t" style="left:845.50px;top:559.95px;font-size:14px;line-height:14px;color:#222">0</div>
<div class="a t" style="left:900.70px;top:559.95px;font-size:14px;line-height:14px;color:#333;letter-spacing:0.566px">hours (Optional)</div>
<div class="a inp" style="left:1051px;top:556px;width:40px;height:22px"></div>
<div class="a t" style="left:1055.50px;top:559.95px;font-size:14px;line-height:14px;color:#222">0</div>
<div class="a t" style="left:1110.50px;top:559.95px;font-size:14px;line-height:14px;color:#333;letter-spacing:0.664px">minutes (Optional)</div>
<svg class="a" style="left:430px;top:584px" width="16" height="16"><rect x="0.5" y="0.5" width="14" height="14" rx="1" fill="#f0f0f0" stroke="#888"/><polygon points="3,4.8 12,4.8 7.5,10" fill="#777"/></svg>
<div class="a t" style="left:449.00px;top:585.85px;font-size:14px;line-height:14px;color:#333;letter-spacing:0.700px;transform:scaleX(1.0595);transform-origin:0.00px 0">Advance</div>
<div class="a t" style="left:442.20px;top:618.85px;font-size:14px;line-height:14px;color:#333;letter-spacing:0.341px">Static DHCP Table</div>
<svg class="a" style="left:584.3px;top:618.5px" width="16" height="16"><circle cx="7.7" cy="7.7" r="6.9" fill="none" stroke="#14a0e6" stroke-width="1.4"/><rect x="6.9" y="6.3" width="1.8" height="6.2" fill="#14a0e6"/><circle cx="7.8" cy="4" r="1.1" fill="#14a0e6"/></svg>
<div class="a" style="left:681px;top:613px;width:575px;height:60px;border:1px solid #c8c8c8;background:#fff"></div>
<div class="a" style="left:681px;top:641px;width:575px;height:19px;background:#b3b3b3"></div>
<svg class="a" style="left:686.8px;top:618.8px" width="17" height="17"><circle cx="8.1" cy="8.1" r="8.1" fill="#5fba00"/><rect x="3.3" y="7.1" width="9.8" height="2.1" fill="#fff"/><rect x="7.2" y="3.2" width="2.1" height="9.8" fill="#fff"/></svg>
<div class="a t" style="left:707.80px;top:619.65px;font-size:14px;line-height:14px;color:#333;letter-spacing:0.700px;transform:scaleX(1.1205);transform-origin:0.00px 0">Add</div>
<svg class="a" style="left:751px;top:619px" width="15" height="16" viewBox="0 0 15 16"><rect x="0" y="1" width="11" height="14" fill="#d4d4d4"/><rect x="2" y="4" width="7" height="5.5" fill="#fff"/><rect x="2" y="10.5" width="7" height="2" fill="#fff"/><rect x="1.5" y="6" width="8" height="4" fill="#7cc4ff"/><polygon points="4.6,9.6 2.4,7.4 10.9,-0.6 13.1,1.6" fill="#ffd870" stroke="#f0b040" stroke-width="0.6"/><polygon points="2.4,7.4 4.6,9.6 2,10.2" fill="#222"/><circle cx="12.2" cy="0.9" r="0.9" fill="#e8204a"/><circle cx="13.4" cy="2.1" r="0.9" fill="#e8204a"/></svg>
<div class="a t" style="left:768.00px;top:619.65px;font-size:14px;line-height:14px;color:#aaa;letter-spacing:0.255px">Edit</div>
<svg class="a" style="left:808px;top:620px" width="12" height="15" viewBox="0 0 12 15"><rect x="4.2" y="0" width="3.8" height="1.8" fill="#f08080"/><rect x="0" y="1.2" width="12" height="2.8" rx="0.6" fill="#ff9a9a"/><rect x="1" y="4" width="10" height="9" fill="#ff9a9a"/><rect x="2" y="13" width="8" height="1.2" fill="#f08080"/><rect x="3" y="5" width="1" height="7" fill="#f08080"/><rect x="5.5" y="5" width="1" height="7" fill="#f08080"/><rect x="8" y="5" width="1" height="7" fill="#f08080"/></svg>
<div class="a t" style="left:825.00px;top:619.65px;font-size:14px;line-height:14px;color:#aaa;letter-spacing:0.700px;transform:scaleX(1.0211);transform-origin:1.00px 0">Remove</div>
<svg class="a" style="left:897px;top:619px" width="16" height="16" viewBox="0 0 16 16"><rect x="0" y="2.5" width="11" height="12" rx="1" fill="#c8c8c8"/><path d="M2.5,4 Q2.5,2 5,2 L5.5,0.8 L7.5,0.8 L8,2 Q10.5,2 10.5,4 Z" fill="#f08a00"/><polygon points="5,7.5 9,7.5 9,5 14,10 9,15 9,12.5 5,12.5" fill="#66bb00" stroke="#2a9a00" stroke-width="0.8"/></svg>
<div class="a t" style="left:914.00px;top:619.65px;font-size:14px;line-height:14px;color:#444;letter-spacing:0.700px;transform:scaleX(1.0334);transform-origin:1.00px 0">Import</div>
<div class="a t" style="left:697.00px;top:645.05px;font-size:14px;line-height:14px;color:#fff">#</div>
<div class="a t" style="left:726.00px;top:645.05px;font-size:14px;line-height:14px;color:#fff;letter-spacing:0.092px">IP Address</div>
<svg class="a" style="left:800px;top:647px" width="8" height="6"><polygon points="0,5.5 3.8,1 7.5,5.5" fill="#fff"/></svg>
<div class="a t" style="left:879.00px;top:645.05px;font-size:14px;line-height:14px;color:#fff;letter-spacing:0.700px;transform:scaleX(1.0764);transform-origin:1.00px 0">MAC</div>
<div class="a t" style="left:1031.60px;top:645.05px;font-size:14px;line-height:14px;color:#fff;letter-spacing:0.700px;transform:scaleX(1.0074);transform-origin:1.00px 0">Description</div>
<div class="a" style="left:416px;top:660px;width:992px;height:32px;background:#f0f0f0"></div>
<div class="a btn" style="left:1247px;top:666px;width:73px;height:20px"></div>
<div class="a btn" style="left:1328px;top:666px;width:73px;height:20px"></div>
<div class="a t" style="left:1273.50px;top:668.95px;font-size:14px;line-height:14px;color:#fff;font-weight:bold;letter-spacing:-0.990px">OK</div>
<div class="a t" style="left:1339.60px;top:668.95px;font-size:14px;line-height:14px;color:#fff;font-weight:bold;letter-spacing:0.700px;transform:scaleX(1.0181);transform-origin:0.00px 0">Cancel</div>
</body></html>
